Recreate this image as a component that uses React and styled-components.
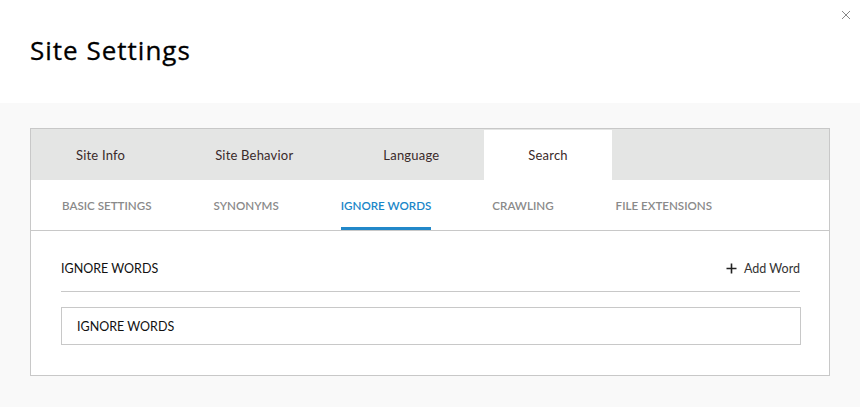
import React from "react";
import styled, { createGlobalStyle } from "styled-components";

const Global = createGlobalStyle`
  html, body { margin: 0; padding: 0; }
  body {
    background: #f9f9f9;
    font-family: "Lato", "Open Sans", sans-serif;
    color: #222;
  }
`;

const Page = styled.div`
  width: 860px;
  height: 407px;
  display: flex;
  flex-direction: column;
  background: #f9f9f9;
`;

const Header = styled.div`
  position: relative;
  height: 103px;
  background: #fff;
  display: flex;
  align-items: center;
  padding-left: 30px;
  box-sizing: border-box;
`;

const Title = styled.h1`
  margin: 0 0 4px 0;
  font-family: "Open Sans", "Lato", sans-serif;
  font-size: 26px;
  font-weight: 400;
  color: #000;
  letter-spacing: 1px;
  -webkit-text-stroke: 0.3px #000;
`;

const Close = styled.button`
  position: absolute;
  top: 8px;
  right: 7px;
  width: 14px;
  height: 14px;
  padding: 0;
  border: none;
  background: none;
  display: flex;
`;

const Body = styled.div`
  padding: 25px 30px 0 30px;
`;

const Panel = styled.div`
  border: 1px solid #c8c8c8;
  background: #fff;
  height: 248px;
  box-sizing: border-box;
`;

const TabBar = styled.div`
  display: flex;
  background: #e4e5e4;
  height: 51px;
  padding-top: 1px;
  box-sizing: border-box;
`;

const Tab = styled.div`
  display: flex;
  align-items: center;
  padding: 0 ${(p) => p.$pad}px;
  font-size: 13px;
  letter-spacing: 0.2px;
  color: #3a2a2a;
  background: ${(p) => (p.$active ? "#fff" : "transparent")};
`;

const SubBar = styled.div`
  display: flex;
  padding-left: 31px;
  height: 51px;
  border-bottom: 1px solid #c8c8c8;
  box-sizing: border-box;
`;

const SubTab = styled.div`
  display: flex;
  align-items: center;
  margin-right: ${(p) => p.$gap}px;
  font-size: 11.6px;
  font-weight: 600;
  color: ${(p) => (p.$active ? "#1a86c8" : "#8a8a8a")};
  border-bottom: 3px solid ${(p) => (p.$active ? "#2288c9" : "transparent")};
  padding-top: 3px;
`;

const Content = styled.div`
  padding: 0 29px 0 30px;
`;

const Row = styled.div`
  display: flex;
  justify-content: space-between;
  align-items: center;
  height: 61px;
  border-bottom: 1px solid #c8c8c8;
  padding-top: 15px;
  box-sizing: border-box;
`;

const Label = styled.div`
  font-size: 12.5px;
  color: #111;
`;

const AddButton = styled.button`
  display: flex;
  align-items: center;
  gap: 7px;
  border: none;
  background: none;
  padding: 0;
  font-family: inherit;
  font-size: 12.5px;
  color: #333;
`;

const WordBox = styled.div`
  margin-top: 15px;
  height: 36px;
  border: 1px solid #c8c8c8;
  display: flex;
  align-items: center;
  padding-left: 15px;
  margin-right: -1px;
`;

const tabs = [
  { name: "Site Info", pad: 45 },
  { name: "Site Behavior", pad: 45 },
  { name: "Language", pad: 45 },
  { name: "Search", pad: 44, active: true },
];

const subTabs = [
  { name: "BASIC SETTINGS", gap: 62 },
  { name: "SYNONYMS", gap: 62 },
  { name: "IGNORE WORDS", gap: 61, active: true },
  { name: "CRAWLING", gap: 62 },
  { name: "FILE EXTENSIONS", gap: 0 },
];

export default function App() {
  return (
    <Page>
      <Global />
      <Header>
        <Title>Site Settings</Title>
        <Close aria-label="close">
          <svg width="14" height="14" viewBox="0 0 14 14">
            <path d="M3 3 L11 11 M11 3 L3 11" stroke="#888" strokeWidth="1" />
          </svg>
        </Close>
      </Header>
      <Body>
        <Panel>
          <TabBar>
            {tabs.map((t) => (
              <Tab key={t.name} $pad={t.pad} $active={t.active}>
                {t.name}
              </Tab>
            ))}
          </TabBar>
          <SubBar>
            {subTabs.map((t) => (
              <SubTab key={t.name} $gap={t.gap} $active={t.active}>
                {t.name}
              </SubTab>
            ))}
          </SubBar>
          <Content>
            <Row>
              <Label>IGNORE WORDS</Label>
              <AddButton>
                <svg width="11" height="11" viewBox="0 0 11 11">
                  <path d="M5.5 0.5 V10.5 M0.5 5.5 H10.5" stroke="#222" strokeWidth="1.6" />
                </svg>
                Add Word
              </AddButton>
            </Row>
            <WordBox>
              <Label>IGNORE WORDS</Label>
            </WordBox>
          </Content>
        </Panel>
      </Body>
    </Page>
  );
}
